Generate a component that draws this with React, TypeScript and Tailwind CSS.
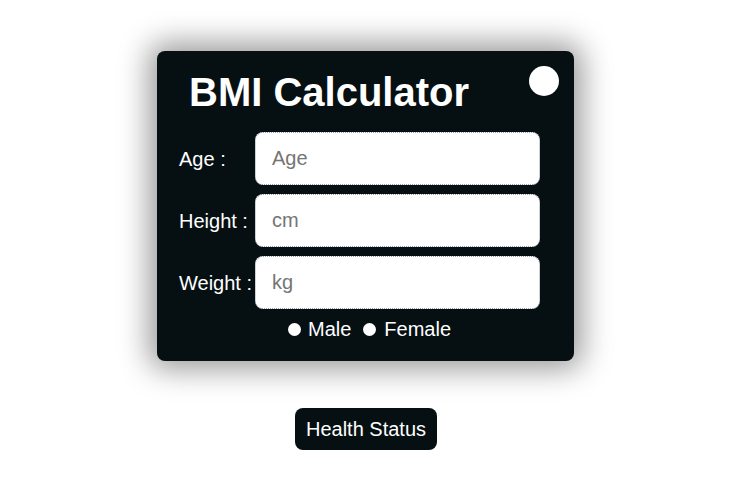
import React from 'react'

const Field = ({ label, placeholder }: { label: string; placeholder: string }) => {
  return (
    <div className="flex items-center">
      <label className="w-[76px] text-[20px] text-white">{label}</label>
      <input
        type="text"
        placeholder={placeholder}
        className="h-[53px] w-[285px] rounded-lg border border-dotted border-gray-400 bg-white px-4 text-[20px] text-black outline-none placeholder:text-[#757575]"
      />
    </div>
  )
}

const App = () => {
  return (
    <div className="flex min-h-screen flex-col items-center bg-white font-['Liberation_Sans',Arial,sans-serif]">
      <div className="relative mt-[51px] ml-[-24px] w-[417px] rounded-lg bg-[#061013] pt-[18px] pb-[20px] pl-[22px] shadow-[0_0_30px_8px_rgba(0,0,0,0.4)]">
        <h1 className="pl-[10px] text-[40px] leading-[46px] font-bold text-white">BMI Calculator</h1>
        <button className="absolute top-[15px] right-[15px] h-[30px] w-[30px] rounded-full bg-white"></button>
        <div className="mt-[17px] flex flex-col gap-[9px]">
          <Field label="Age :" placeholder="Age" />
          <Field label="Height :" placeholder="cm" />
          <Field label="Weight :" placeholder="kg" />
        </div>
        <div className="mt-[8px] flex items-center pl-[109px] text-[20px] leading-[24px] text-white">
          <span className="mr-[7px] h-[13px] w-[13px] rounded-full bg-white"></span>
          <span>Male</span>
          <span className="mr-[8px] ml-[12px] h-[13px] w-[13px] rounded-full bg-white"></span>
          <span>Female</span>
        </div>
      </div>
      <button className="mt-[47px] ml-[-23px] h-[42px] rounded-lg bg-[#061013] px-[11px] text-[20px] text-white">
        Health Status
      </button>
    </div>
  )
}

export default App
